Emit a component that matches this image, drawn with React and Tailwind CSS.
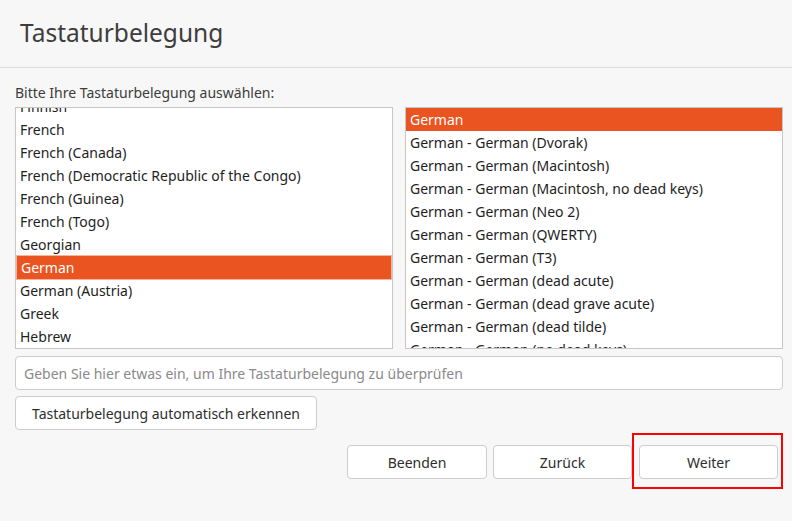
import React from "react";

const leftItems = [
  "Finnish",
  "French",
  "French (Canada)",
  "French (Democratic Republic of the Congo)",
  "French (Guinea)",
  "French (Togo)",
  "Georgian",
  "German",
  "German (Austria)",
  "Greek",
  "Hebrew",
];

const rightItems = [
  "German",
  "German - German (Dvorak)",
  "German - German (Macintosh)",
  "German - German (Macintosh, no dead keys)",
  "German - German (Neo 2)",
  "German - German (QWERTY)",
  "German - German (T3)",
  "German - German (dead acute)",
  "German - German (dead grave acute)",
  "German - German (dead tilde)",
  "German - German (no dead keys)",
];

function Row({ label, selected, focused }) {
  return (
    <div
      className={
        "h-[23px] shrink-0 flex items-center px-[4px] whitespace-nowrap " +
        (selected
          ? "bg-[#e95420] text-white" + (focused ? " mx-[1px] ring-1 ring-[#f5b39a]" : "")
          : "text-[#1e1e1e]")
      }
    >
      {label}
    </div>
  );
}

function List({ items, selected, offset, focused }) {
  return (
    <div className="flex-1 h-[242px] bg-white border border-[#c6c6c6] overflow-hidden">
      <div className={"flex flex-col " + offset}>
        {items.map((it) => (
          <Row key={it} label={it} selected={it === selected} focused={focused} />
        ))}
      </div>
    </div>
  );
}

function Button({ children, className = "" }) {
  return (
    <button
      className={
        "h-[34px] bg-white border border-[#cdcdcd] rounded-[4px] text-[14px] text-[#2e2e2e] flex items-center justify-center " +
        className
      }
    >
      {children}
    </button>
  );
}

export default function App() {
  return (
    <div
      className="w-[792px] h-[521px] bg-[#f7f7f7] flex flex-col overflow-hidden text-[14px]"
      style={{ fontFamily: '"Noto Sans", "Open Sans", sans-serif' }}
    >
      {/* Kopfzeile */}
      <div className="h-[68px] shrink-0 border-b border-[#dcdcdc] flex items-center pl-[20px]">
        <h1 className="text-[24.5px] text-[#3d3d3d]">Tastaturbelegung</h1>
      </div>

      <div className="flex flex-col px-[15px] pr-[9px]">
        <div className="h-[39px] flex items-end pb-[4px] text-[#3c3c3c]">
          Bitte Ihre Tastaturbelegung auswählen:
        </div>

        {/* Listen */}
        <div className="flex gap-[12px]">
          <List items={leftItems} selected="German" offset="-mt-[13px]" focused />
          <List items={rightItems} selected="German" offset="" />
        </div>

        {/* Eingabe */}
        <div className="mt-[7px] h-[34px] bg-white border border-[#cdcdcd] rounded-[4px] flex items-center px-[8px] text-[#8a8a8a]">
          Geben Sie hier etwas ein, um Ihre Tastaturbelegung zu überprüfen
        </div>

        <div className="mt-[6px] flex">
          <Button className="w-[302px]">Tastaturbelegung automatisch erkennen</Button>
        </div>

        {/* Navigation */}
        <div className="mt-[15px] flex justify-end items-center pr-[5px]">
          <Button className="w-[140px]">Beenden</Button>
          <Button className="w-[139px] ml-[6px]">Zurück</Button>
          <div className="relative ml-[7px]">
            <Button className="w-[139px]">Weiter</Button>
            <div className="absolute -left-[7px] -right-[5px] -top-[12px] -bottom-[10px] border-2 border-[#ff0000] pointer-events-none" />
          </div>
        </div>
      </div>
    </div>
  );
}
